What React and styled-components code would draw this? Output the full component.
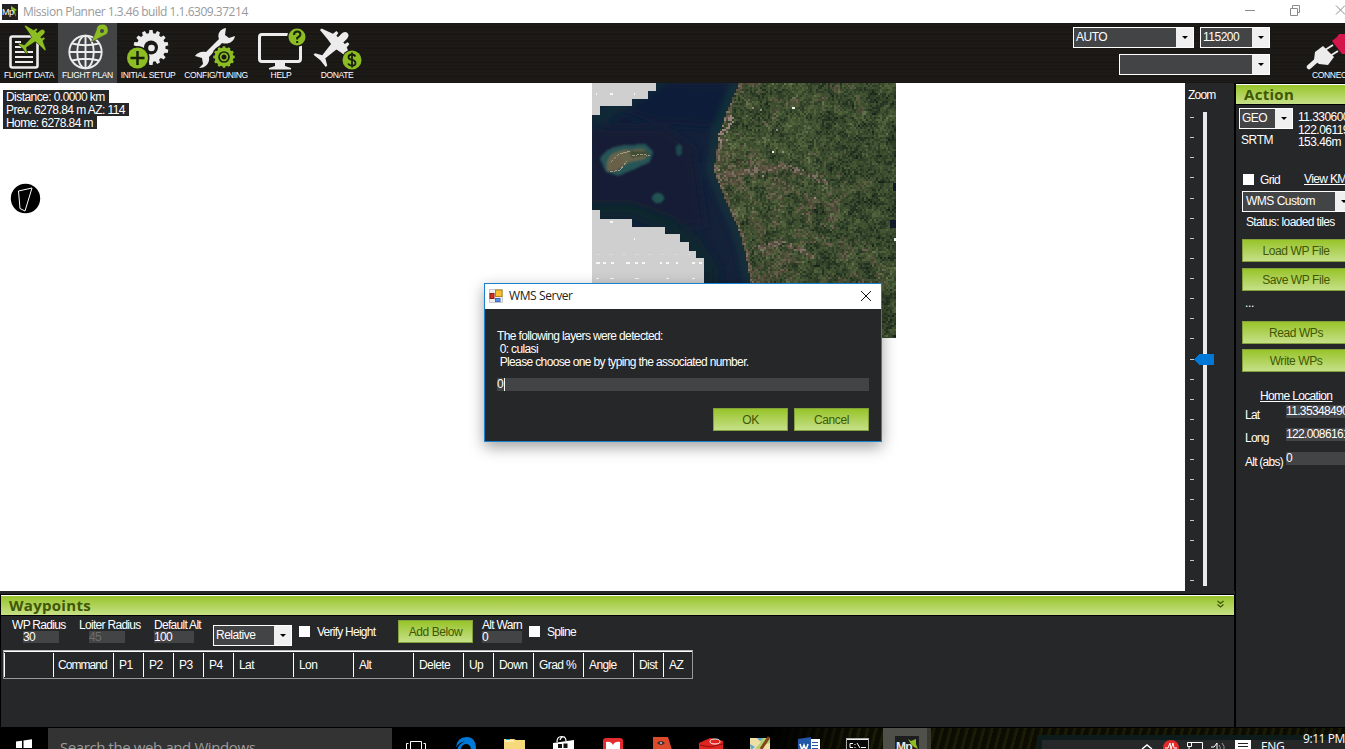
import React from "react";
import styled, { createGlobalStyle, css } from "styled-components";

const GlobalStyle = createGlobalStyle`
  * { box-sizing: border-box; }
  body { margin: 0; overflow: hidden; background: #000; }
`;

const ink = "#262729";
const sans = `"Liberation Sans", Arial, sans-serif`;
const humanist = `"Open Sans", "Noto Sans", sans-serif`;
const green = "linear-gradient(#98c42a, #c6e088)";

const Window = styled.div`
  width: 1345px; height: 749px; overflow: hidden; position: relative;
  display: flex; flex-direction: column; background: ${ink};
  font: 12px/13px ${sans}; letter-spacing: -0.64px; color: #fff;
  white-space: nowrap;
`;

/* ---------- title bar ---------- */
const TitleBar = styled.header`
  flex: 0 0 23px; background: #fff; color: #999; display: flex; align-items: center;
  padding-left: 2px; gap: 5px; font: 12px/22px ${humanist}; letter-spacing: -0.48px;
`;
const TitleText = styled.span`flex: 1; padding-top: 1px;`;
const TitleButtons = styled.svg`flex: none; width: 105px; height: 23px;`;

/* ---------- toolbar ---------- */
const Toolbar = styled.nav`
  flex: 0 0 60px; display: flex;
  background: repeating-linear-gradient(#1b1916 0 2px, #1e1b18 2px 3px, #191714 3px 5px, #1c1a17 5px 7px);
`;
const Tool = styled.div`
  width: ${p => p.$w}px; height: 60px; display: flex; flex-direction: column; align-items: center;
  background: ${p => (p.$active ? "#434446" : "transparent")};
  svg { display: block; flex: none; height: 47px; }
`;
const ToolLabel = styled.span`font: 8.5px/10px ${sans}; letter-spacing: -0.35px;`;
const Ports = styled.div`
  margin-left: auto; width: 197px; padding-top: 4px;
  display: grid; grid-template-columns: auto auto; justify-content: end; align-content: start; gap: 6px;
`;
const ConnectTool = styled(Tool)`margin-left: 33px; width: 42px; overflow: hidden; align-items: flex-start;`;
const ConnectLabel = styled(ToolLabel)`padding-left: 9px;`;

/* ---------- controls ---------- */
const SelectBox = styled.div`
  width: ${p => p.$w}px; height: 21px; border: 1px solid #fff; background: #434446;
  display: flex; flex: none; letter-spacing: -0.5px;
  ${p => p.$wide && css`grid-column: 1 / -1; justify-self: end;`}
  span { flex: 1; padding-left: ${p => p.$pad || 2}px; line-height: 19px; }
  i { width: 17px; background: #f0f0f0; display: grid; place-items: center; }
  i::after { content: ""; border: solid transparent; border-width: 3px 3px 0; border-top-color: #000; }
`;
const Select = ({ w, wide, pad, children }) => (
  <SelectBox $w={w} $wide={wide} $pad={pad}><span>{children}</span><i /></SelectBox>
);
const Button = styled.button`
  width: ${p => p.$w}px; height: 23px; padding: 0; margin: 0; flex: none; border: 1px solid #84a23c;
  background: ${green}; color: #405704; font: 12px/20px ${sans}; letter-spacing: -0.42px;
`;
const Check = styled.i`width: 11px; height: 11px; background: #fff; flex: none;`;
const Input = styled.div`
  width: ${p => p.$w}px; height: 13px; background: #434446; flex: none;
  color: ${p => (p.$dim ? "#6d6d6d" : "#fff")}; line-height: 13px; overflow: hidden;
`;
const SectionHeader = styled.h2`
  margin: 0; height: 21px; flex: none; border-top: 1px solid #fff; border-bottom: 1px solid #000;
  background: ${green}; color: #405704; padding: 0 10px 0 8px;
  font: bold 15px/18px ${humanist}; letter-spacing: 0.3px;
  display: flex; justify-content: space-between;
  svg { margin-top: 4px; }
`;

/* ---------- workspace ---------- */
const Workspace = styled.main`flex: 0 0 645px; display: flex;`;
const Left = styled.section`
  width: 1236px; display: flex; flex-direction: column; border-right: 1px solid #000;
`;
const MapRow = styled.div`display: flex; height: 508px;`;
const MapView = styled.div`
  width: 1185px; background: #fff; display: flex; align-items: flex-start;
`;
const MapInfo = styled.div`
  width: 592px; padding: 7px 0 0 3px; display: flex; flex-direction: column; align-items: flex-start;
  span { background: ${ink}; padding: 0 4px 0 3px; height: 13px; line-height: 14px; letter-spacing: -0.56px; }
`;
const Compass = styled.svg`margin: 54px 0 0 7px; width: 31px; height: 31px;`;
const Satellite = styled.svg`width: 304px; height: 255px; display: block;`;

const ZoomColumn = styled.aside`
  width: 50px; background: ${ink}; padding-top: 6px; border-right: 1px solid #000;
  display: flex; flex-direction: column;
  span { padding-left: 3px; letter-spacing: -0.8px; }
  svg { width: 48px; height: 488px; display: block; }
`;

const Waypoints = styled.section`margin-top: 3px; height: 134px; border: 1px solid #000;`;
const WaypointControls = styled.div`
  height: 34px; padding-left: 11px; display: grid; align-items: start;
  grid-template-columns: 67px 75px 59px 86px 99px 84px 46px auto;
`;
const Field = styled.div`
  padding-top: 3px; display: flex; flex-direction: column; line-height: 12px; letter-spacing: -0.7px;
  ${Input} { margin-left: ${p => p.$indent || 0}px; height: 12px; line-height: 13px; }
`;
const Option = styled.label`
  display: flex; gap: 7px; padding: 9px 0 0 ${p => p.$x || 0}px; letter-spacing: -0.75px;
  line-height: 14px;
  ${Check} { margin-top: 1px; }
`;
const Drop = styled.div`padding-top: ${p => p.$y}px;`;
const Grid = styled.div`
  margin-left: 2px; width: 690px; height: 29px; border: 1px solid #999; border-top-color: #bbb; display: flex;
  box-shadow: inset 0 1px #fff; padding: 2px 0 1px;
`;
const GridHead = styled.div`
  width: ${p => p.$w}px; padding-left: ${p => p.$pad || 5}px; border-left: 1px solid #fff;
  line-height: 24px; letter-spacing: ${p => (p.$pad ? "-0.95px" : "-0.6px")};
`;

/* ---------- right panel ---------- */
const Actions = styled.section`
  width: 109px; overflow: hidden; display: flex; flex-direction: column; align-items: flex-start;
  border: solid #000; border-width: 1px 0 1px 0;
  ${SectionHeader} { width: 140px; }
`;
const Position = styled.div`
  display: grid; grid-template-columns: 56px auto; grid-template-rows: 26px auto; padding: 3px 0 0 3px;
  height: 66px; align-items: start;
  p { margin: 0; line-height: 12.5px; grid-row: span 2; padding: 3px 0 0 3px; letter-spacing: -0.55px; }
  small { font-size: 12px; padding-left: 2px; letter-spacing: -0.4px; }
`;
const GridLine = styled.div`display: flex; height: 20px; padding-left: 7px; width: 140px;
  ${Check} { margin: 3px 6px 0 0; } span { width: 44px; padding-top: 3px; } u { padding-top: 2px; }`;
const Status = styled.div`padding: 4px 0 0 10px; height: 27px;`;
const Stack = styled.div`padding-left: 6px; display: flex; flex-direction: column; gap: ${p => p.$gap}px;`;
const Dots = styled.div`height: 30px; padding: 6px 0 0 9px; letter-spacing: -0.3px;`;
const Home = styled.div`
  padding: 18px 0 0 9px; display: grid; grid-template-columns: 41px 80px;
  grid-template-rows: 15px; grid-auto-rows: 23.3px;
  label { padding-top: 4px; letter-spacing: -0.75px; }
`;
const HomeTitle = styled.u`grid-column: 1 / -1; padding-left: 15px;`;

/* ---------- dialog ---------- */
const Dialog = styled.div`
  position: absolute; left: 484px; top: 283px; width: 398px; height: 159px;
  border: 1px solid #1a80d0; background: ${ink}; box-shadow: 0 5px 14px rgba(0,0,0,.38);
  display: flex; flex-direction: column;
`;
const DialogTitle = styled.div`
  height: 25px; background: #fff; color: #222; display: flex; align-items: center; padding: 0 10px 1px 4px; gap: 6px;
  font: 12px/24px ${humanist}; letter-spacing: -0.38px;
  span { flex: 1; } svg { flex: none; }
`;
const DialogBody = styled.div`padding: 21px 12px 0; display: flex; flex-direction: column;
  p { margin: 0; white-space: pre; }
  ${Input} { margin-top: 9px; }
`;
const Caret = styled.i`border-left: 1px solid #fff; margin-left: 1px;`;
const DialogButtons = styled.div`display: flex; justify-content: flex-end; gap: 6px; margin-top: 17px;`;

/* ---------- taskbar ---------- */
const Taskbar = styled.footer`
  flex: 0 0 21px; display: flex; overflow: hidden;
  background: linear-gradient(90deg, #000 770px, transparent 860px),
    repeating-linear-gradient(105deg, #0c0c02 0 4px, #1b1c07 6px 8px);
`;
const Start = styled.svg`width: 48px; height: 21px; background: #000; flex: none;`;
const Search = styled.div`
  width: 344px; height: 21px; background: #333; color: #9c9c9c; padding-left: 12px; overflow: hidden; flex: none;
  font: 15px/38px ${humanist}; letter-spacing: -0.4px;
`;
const Apps = styled.svg`width: 645px; height: 21px; flex: none;`;
const Tray = styled.div`
  width: 308px; height: 21px; border: solid #0d1b1b; border-width: 5px 0 0 5px; margin-top: 7px; background: #262729;
  display: flex; font: 12px/14px ${humanist}; flex: none;
  svg { width: 219px; height: 10px; flex: none; }
`;
const Language = styled.span`width: 43px; letter-spacing: -0.4px;`;
const Clock = styled.span`margin-top: -8px; padding-left: 1px; letter-spacing: -0.4px;`;

/* ---------- drawings ---------- */
const LIME = "#8cbd22";
const PALE = "#ececec";

const LogoMark = () => (
  <svg width="16" height="16" viewBox="0 0 16 16">
    <rect width="16" height="16" fill="#222" />
    <path d="M9 2l6 4-2 1 1 6-2-4-3-4z" fill={LIME} />
    <text x="0" y="11" fontSize="9" fill="#fff" fontFamily="Liberation Sans">Mp</text>
  </svg>
);

/* twin-engine airplane seen from above, nose pointing up */
const PLANE =
  "M0-17C2.500-17 3.500-15 3.500-12V-8H5.500L6-11H8.500L9-7L20-3V-1L9 0L3.500 1L2 14L8 17.500V19.500L0 18.500" +
  "L-8 19.500V17.500L-2 14L-3.500 1L-9 0L-20-1V-3L-9-7L-8.500-11H-6L-5.500-8H-3.500V-12C-3.500-15-2.500-17 0-17Z";

function gear(cx, cy, outer, inner, teeth) {
  const pts = [];
  for (let i = 0; i < teeth; i++) {
    [[-0.32, inner], [-0.2, outer], [0.2, outer], [0.32, inner]].forEach(([o, r]) => {
      const a = ((i + o) / teeth) * Math.PI * 2;
      pts.push(`${(cx + r * Math.sin(a)).toFixed(2)},${(cy - r * Math.cos(a)).toFixed(2)}`);
    });
  }
  return pts.join(" ");
}

const FlightDataIcon = () => (
  <svg width="58" viewBox="0 23 58 47">
    <rect x="10.500" y="36.500" width="27" height="31" rx="2" fill="none" stroke={PALE} strokeWidth="2.600" />
    <path d="M15 42h6M15 47h10M15 52h18M15 57h18M15 62h18" stroke={PALE} strokeWidth="2" />
    <path d={PLANE} fill={LIME} stroke="#1b1916" strokeWidth=".7" transform="translate(34 39) rotate(50) scale(.8)" />
  </svg>
);
const FlightPlanIcon = () => (
  <svg width="59" viewBox="58 23 59 47">
    <g fill="none" stroke={PALE} strokeWidth="1.900">
      <circle cx="85.500" cy="52" r="16.200" />
      <ellipse cx="85.500" cy="52" rx="8.300" ry="16.200" />
      <path d="M85.500 36v32M69.500 52h32M72 43.500q13.500 3.500 27 0M72 60.500q13.500-3.500 27 0" />
    </g>
    <path d="M91.500 42L96.500 29.500A5.800 5.800 0 1 1 104 35.500Z" fill={LIME} stroke="#434446" strokeWidth=".6" />
    <circle cx="102" cy="31" r="2" fill="#434446" />
  </svg>
);
const InitialSetupIcon = () => (
  <svg width="62" viewBox="117 23 62 47">
    <polygon points={gear(151, 47.500, 17.500, 14.500, 14)} fill={PALE} />
    <circle cx="151" cy="47.500" r="7" fill="#1b1916" />
    <circle cx="151.500" cy="48" r="3.300" fill={PALE} />
    <circle cx="137.500" cy="58" r="12" fill="#1b1916" />
    <circle cx="137.500" cy="58" r="10.500" fill={LIME} />
    <path d="M137.500 51v14M130.500 58h14" stroke="#16200a" strokeWidth="2.500" />
  </svg>
);
const ConfigIcon = () => (
  <svg width="74" viewBox="179 23 74 47">
    <path d="M226 28c-6 1-9 6-7 11L206 52c-5-1-9 1-11 4l7 2 1 6-4 4c7 0 11-5 10-11L222 43c6 2 12-1 13-7l-6 2-4-3z" fill={PALE} />
    <circle cx="224" cy="57" r="12" fill="#1b1916" />
    <polygon points={gear(224, 57, 10.800, 9.300, 12)} fill={LIME} />
    <circle cx="224" cy="57" r="5" fill="none" stroke="#1d260d" strokeWidth="1.700" />
    <circle cx="224" cy="57" r="2.500" fill="#1b1916" />
  </svg>
);
const HelpIcon = () => (
  <svg width="56" viewBox="253 23 56 47">
    <rect x="259.500" y="34.500" width="41" height="27" rx="2.500" fill="none" stroke={PALE} strokeWidth="3" />
    <path d="M275 62h10v4l6 2v1.500h-22V68l6-2z" fill={PALE} />
    <circle cx="297" cy="37" r="10" fill="#1b1916" />
    <circle cx="297" cy="37" r="8.500" fill={LIME} />
    <path d="M294 35q0-3.500 3.200-3.500t3.200 2.700q0 2-3.200 3.600v1.700M297.200 41v2" fill="none" stroke="#1b210f" strokeWidth="2" />
  </svg>
);
const DonateIcon = () => (
  <svg width="56" viewBox="309 23 56 47">
    <path d={PLANE} fill={PALE} transform="translate(334.500 46) rotate(45) scale(1.080)" />
    <circle cx="352" cy="60" r="10.500" fill="#1b1916" />
    <circle cx="352" cy="60" r="9.500" fill={LIME} />
    <path d="M355.500 56.500q-1-2-3.500-2-3.500 0-3.500 2.700 0 2 3.500 2.700t3.500 3q0 2.800-3.500 2.800-2.800 0-3.800-2.200M352 52.500v15" fill="none" stroke="#1b210f" strokeWidth="1.800" />
  </svg>
);
const ConnectIcon = () => (
  <svg width="42" viewBox="1303 23 42 47">
    <path d="M1309 67l9-8" stroke={PALE} strokeWidth="4.500" strokeLinecap="round" />
    <path d="M1315 52l8-6 11 11-6 8-9-1-5-4z" fill={PALE} />
    <path d="M1325 50l8-5M1330 56l8-5" stroke={PALE} strokeWidth="2" />
    <path d="M1332 41l5-4 2-3h8v20h-5z" fill="#d5164b" />
  </svg>
);

/* terrain raster: 2px cells grouped by colour into one path each */
const COAST = [[0, 146], [25, 135], [50, 126], [87, 121], [117, 133], [144, 145], [170, 153], [200, 158], [256, 168]];
const coastAt = y => {
  for (let i = 1; i < COAST.length; i++) {
    const [y0, x0] = COAST[i - 1];
    const [y1, x1] = COAST[i];
    if (y <= y1) return x0 + ((x1 - x0) * (y - y0)) / (y1 - y0);
  }
  return 168;
};
const hash = (x, y) => {
  let n = Math.imul(x | 0, 374761393) + Math.imul(y | 0, 668265263);
  n = Math.imul(n ^ (n >>> 13), 1274126177);
  return ((n ^ (n >>> 16)) >>> 0) / 4294967296;
};
const smooth = (x, y) => {
  const xi = Math.floor(x), yi = Math.floor(y), fx = x - xi, fy = y - yi;
  const top = hash(xi, yi) * (1 - fx) + hash(xi + 1, yi) * fx;
  const bottom = hash(xi, yi + 1) * (1 - fx) + hash(xi + 1, yi + 1) * fx;
  return top * (1 - fy) + bottom * fy;
};
const GREENS = ["#18231a", "#243221", "#303f28", "#3a4b2e", "#445534", "#50613c", "#62724c"];
const BROWNS = ["#43442f", "#4e4b38", "#5b5240", "#6a5d4e", "#7d7064"];
const RIVERS = [
  [[124, 92], [155, 88], [190, 82], [215, 90], [235, 100]],
  [[165, 165], [185, 158], [205, 164], [222, 174]],
];
const riverDistance = (x, y) => {
  let best = 99;
  RIVERS.forEach(line => {
    for (let i = 1; i < line.length; i++) {
      const [ax, ay] = line[i - 1], [bx, by] = line[i];
      if (x >= ax && x <= bx) best = Math.min(best, Math.abs(y - (ay + ((by - ay) * (x - ax)) / (bx - ax))));
    }
  });
  return best;
};
const terrain = (() => {
  const out = {};
  for (let y = 0; y < 255; y += 2) {
    const edge = coastAt(y);
    for (let x = Math.ceil(edge / 2) * 2; x < 304; x += 2) {
      const n = hash(x, y);
      const m = hash(y + 7, x + 3);
      const large = smooth(x / 24 + 9, y / 20 + 4);
      const mid = smooth(x / 7, y / 7);
      const inland = (x - edge) / 150;
      const river = riverDistance(x, y) < 3;
      const shore = x - edge < 4;
      const brown = large * 0.45 + mid * 0.4 + (river ? 0.28 : 0) + (shore ? 0.25 : 0) - inland * 0.2;
      let c;
      if (brown + n * 0.35 > 0.68) c = BROWNS[Math.min(4, Math.floor(m * 4 + (river || shore ? 1 : 0)))];
      else c = GREENS[Math.max(0, Math.min(6, Math.floor(m * 3.6 + mid * 3.4 + 0.7 - inland * 0.9)))];
      if (n > 0.998 && x < 230) c = "#938a7b";
      if (x - edge < 10 && y > 30 && y < 60 && n > 0.6) c = "#96827b";
      out[c] = (out[c] || "") + `M${x} ${y}h2v2h-2z`;
    }
  }
  return out;
})();
const coastLine = COAST.map(([y, x]) => `${x},${y}`).join(" ");

const SatelliteTiles = () => (
  <Satellite viewBox="0 0 304 255" shapeRendering="crispEdges">
    <defs>
      <linearGradient id="sea" x1="0" x2="1">
        <stop offset="0" stopColor="#111f38" /><stop offset=".65" stopColor="#15223a" /><stop offset="1" stopColor="#132d3b" />
      </linearGradient>
      <filter id="soft"><feGaussianBlur stdDeviation="4" /></filter>
      <filter id="softer"><feGaussianBlur stdDeviation="1.2" /></filter>
    </defs>
    <rect width="304" height="255" fill="url(#sea)" />
    <g filter="url(#soft)">
      <path d="M62 0h76l-12 44-60-4-32-10z" fill="#081c37" />
      <path d="M-4 44h75l30 20 12 80-55-4-62-16z" fill="#171f36" />
      <path d="M0 39L70-4" stroke="#0b2b35" strokeWidth="12" />
      <path d="M-4 127h42l38 14 26 20 16 26v30" fill="none" stroke="#07272f" strokeWidth="15" />
      <polyline points={coastLine} transform="translate(-1)" fill="none" stroke="#19373b" strokeWidth="7" />
    </g>
    <g filter="url(#softer)">
      <path d="M8 76Q14 63 35 62l18-1 8 8-3 10-15 7-17 7-12-4z" fill="#265556" />
      <path d="M15 79q4-11 18-12l18-1 6 5-4 5-16 3-13 8-9 1z" fill="#66654c" />
      <path d="M17 86l4-10 9-3 2 8-8 7z" fill="#6b5e4a" />
      <path d="M38 68l16 0 4 4-19 3z" fill="#3c4d35" />
      <ellipse cx="87" cy="67" rx="3.500" ry="6" fill="#1b4650" />
      <ellipse cx="66" cy="115" rx="6" ry="5" fill="#225253" />
    </g>
    <path d="M19 79l8-8 12-3M40 73l10-2 8 2M18 89l10-2 7-9" fill="none" stroke="#a39a82" strokeDasharray="3 1" />
    {Object.entries(terrain).map(([fill, d]) => <path key={fill} d={d} fill={fill} />)}
    <path d="M304 100h-3v8h3zM298 137h6v8h-6z" fill="#101a28" />
    <path d="M200 24h3v2h-3zM180 68h2v2h-2zM302 155h2v3h-2z" fill="#eee" />
    <path d="M0 0h64v8h-8v8h-16v7H8v9H0z" fill="#cfcfcf" />
    <path d="M0 127h8v9h32v8h33v7h15v8h9v9h7v7h8v80H0z" fill="#cfcfcf" />
    <path d="M4 10h1v2H4zM18 10h3v2h-3zM42 10h1v2h-1zM18 138h3v2h-3zM42 155h1v2h-1zM4 179h4v2H4zM11 179h3v2h-3zM19 179h3v2h-3zM34 179h4v2h-4zM43 179h3v2h-3zM50 179h3v2h-3zM68 179h2v2h-2zM74 179h3v2h-3zM84 179h2v2h-2zM100 179h3v2h-3zM107 179h3v2h-3zM4 195h3v1H4zM18 195h4v1h-4zM43 195h4v1h-4zM74 195h3v1h-3zM100 195h3v1h-3z" fill="#f7f7f7" />
    <path d="M4 171.500h98" stroke="#d9d9d9" strokeDasharray="4 9" />
  </Satellite>
);

const TICKS = Array.from({ length: 24 }, (_, i) => 15 + i * 20.13);
const ZoomSlider = () => (
  <svg viewBox="0 0 48 488" shapeRendering="crispEdges">
    {TICKS.map(y => <rect key={y} x="5" y={Math.round(y)} width="4" height="1" fill="#c8c8c8" />)}
    <rect x="18" y="10" width="4" height="474" fill="#e7eaea" />
    <path d="M9 257.500l6-5.500h14v11H15z" fill="#0078d7" />
  </svg>
);

const AppIcons = () => (
  <Apps viewBox="392 728 645 21">
    <path d="M410.500 750v-8.500h11v8.500M406.500 751v-7.500h2M425.500 751v-7.500h-2" fill="none" stroke="#fff" />
    <path d="M456 747.500q1-10.500 10.500-10.500Q476 737 476 749h-5q-1-5-5-5-3.500 0-5.500 5h-3q1-5 7-7.500-5 .5-8.500 6z" fill="#0078d7" />
    <path d="M504 739h10l2 1h9v10h-21z" fill="#f6d97b" /><path d="M505 740h8l2 2h-10z" fill="#fff0b0" /><path d="M506 739h4v1h-4z" fill="#24a2d8" />
    <path d="M553 743l21-3v10h-21z" fill="#fff" /><path d="M557 742q0-5.500 4.500-5.500t4.500 4.500M560 740q1-4 5-3" fill="none" stroke="#fff" strokeWidth="1.200" />
    <path d="M558 744h4v4h-4zM563.500 743.500h4v4.500h-4z" fill="#111" />
    <rect x="603" y="738" width="20" height="14" rx="3" fill="#e32b30" /><path d="M606 742q5-1 7 3 2-4 7-3v8h-14z" fill="#fff" />
    <path d="M653 737h15l4 13h-19z" fill="#dd4b2c" /><path d="M657 743q4-4 8 0-4 4-8 0z" fill="#3b302e" /><circle cx="661" cy="743" r="1" fill="#c9c9c9" />
    <path d="M699 743l11-5 13 3v9h-24z" fill="#e1231f" /><ellipse cx="715" cy="741.500" rx="5" ry="2.500" fill="none" stroke="#fff" /><path d="M700 745l10 2 13-3" stroke="#8e100e" fill="none" />
    <path d="M750 738h20v12h-20z" fill="#b6cf76" /><path d="M750 738h7l4 4-7 8h-4zM764 745l6-2v7h-8z" fill="#eee0a4" /><path d="M757 738h6l-3 3zM750 744l5 3-4 3z" fill="#58a7d4" /><path d="M769 737l-8 12" stroke="#854217" strokeWidth="3" />
    <path d="M798 739l13-2v13h-13z" fill="#2357a8" /><path d="M811 739h9v11h-9z" fill="#fff" /><path d="M812 742.500h6M812 745.500h6M812 748.500h6" stroke="#2357a8" />
    <path d="M800 744l2 6 2-5 2 5 2-6" stroke="#fff" fill="none" strokeWidth="1.500" />
    <rect x="846.500" y="738.500" width="22" height="13" fill="#080808" stroke="#aaa" /><path d="M847 739.500h21" stroke="#eee" /><path d="M853 743.500h-3v4h3M855 744v1M855 747v1M857 743l3 5M861 747.500h5" fill="none" stroke="#fff" />
    <rect x="883" y="728" width="44" height="21" fill="#50504a" /><rect x="927" y="728" width="4" height="21" fill="#38382f" />
    <rect x="895" y="736" width="24" height="14" fill="#1d1e1f" />
    <path d="M908 739l3 2 5-2v5l2 5-4-2-3-3z" fill={LIME} />
    <text x="896" y="751" fontSize="12" fontWeight="bold" fill="#e8e8e8" fontFamily="Liberation Sans">Mp</text>
  </Apps>
);
const TrayIcons = () => (
  <svg viewBox="1042 740 219 10">
    <path d="M1142 749l5-4 5 4" fill="none" stroke="#fff" strokeWidth="1.500" />
    <circle cx="1171" cy="748" r="8" fill="#e52a2c" /><path d="M1165 748h3l2-5 1 6 2-6 1 5h3" stroke="#fff" fill="none" />
    <path d="M1191 742.500h11.500v8M1187.500 742.500h4v4h-4zM1189 747v3h3" fill="none" stroke="#fff" />
    <path d="M1211 747h3l3-4v8" fill="none" stroke="#fff" /><path d="M1219 745q2 2 1 5M1222 743q3 3 2 7" fill="none" stroke="#999" />
    <rect x="1235" y="740" width="16" height="11" fill="#fff" /><path d="M1238 743.500h10M1238 746.500h10" stroke="#222" />
  </svg>
);

const TOOLS = [
  ["FLIGHT DATA", 58, FlightDataIcon], ["FLIGHT PLAN", 59, FlightPlanIcon], ["INITIAL SETUP", 62, InitialSetupIcon],
  ["CONFIG/TUNING", 74, ConfigIcon], ["HELP", 56, HelpIcon], ["DONATE", 56, DonateIcon],
];
const COLUMNS = [
  ["", 49], ["Command", 60, 4], ["P1", 30], ["P2", 30], ["P3", 30], ["P4", 30], ["Lat", 60], ["Lon", 60], ["Alt", 60],
  ["Delete", 50], ["Up", 30], ["Down", 40], ["Grad %", 50], ["Angle", 50], ["Dist", 30], ["AZ", 28],
];

export default function App() {
  return (
    <Window>
      <GlobalStyle />
      <TitleBar>
        <LogoMark />
        <TitleText>Mission Planner 1.3.46 build 1.1.6309.37214</TitleText>
        <TitleButtons viewBox="1240 0 105 23" fill="none" stroke="#8c8c8c">
          <path d="M1245 10.500h10M1290.500 8.500h7v7h-7zM1292.500 8v-2.500h7v7h-2M1336 5.500l9 9M1345 5.500l-9 9" />
        </TitleButtons>
      </TitleBar>

      <Toolbar>
        {TOOLS.map(([label, w, Icon]) => (
          <Tool key={label} $w={w} $active={label === "FLIGHT PLAN"}><Icon /><ToolLabel>{label}</ToolLabel></Tool>
        ))}
        <Ports>
          <Select w={121}>AUTO</Select>
          <Select w={70}>115200</Select>
          <Select w={151} wide />
        </Ports>
        <ConnectTool $w={42}><ConnectIcon /><ConnectLabel>CONNECT</ConnectLabel></ConnectTool>
      </Toolbar>

      <Workspace>
        <Left>
          <MapRow>
            <MapView>
              <MapInfo>
                <span>Distance: 0.0000 km</span>
                <span>Prev: 6278.84 m AZ: 114</span>
                <span>Home: 6278.84 m</span>
                <Compass viewBox="0 0 31 31">
                  <circle cx="15.500" cy="15.500" r="14.700" fill="#000" />
                  <path d="M8.500 8l13.500-3-7 23-5-2.500z" fill="none" stroke="#fff" />
                </Compass>
              </MapInfo>
              <SatelliteTiles />
            </MapView>
            <ZoomColumn><span>Zoom</span><ZoomSlider /></ZoomColumn>
          </MapRow>

          <Waypoints>
            <SectionHeader>
              Waypoints
              <svg width="7" height="8" viewBox="0 0 7 8">
                <path d="M.5 1l3 2.500 3-2.500M.5 4.500l3 2.500 3-2.500" fill="none" stroke="#405704" strokeWidth="1.300" />
              </svg>
            </SectionHeader>
            <WaypointControls>
              <Field $indent={11}>WP Radius<Input $w={36}>30</Input></Field>
              <Field $indent={10}>Loiter Radius<Input $w={36} $dim>45</Input></Field>
              <Field>Default Alt<Input $w={40}>100</Input></Field>
              <Drop $y={9}><Select w={79}>Relative</Select></Drop>
              <Option><Check />Verify Height</Option>
              <Drop $y={4}><Button $w={75}>Add Below</Button></Drop>
              <Field>Alt Warn<Input $w={40}>0</Input></Field>
              <Option $x={1}><Check />Spline</Option>
            </WaypointControls>
            <Grid>{COLUMNS.map(([name, w, pad]) => <GridHead key={name} $w={w} $pad={pad}>{name}</GridHead>)}</Grid>
          </Waypoints>
        </Left>

        <Actions>
          <SectionHeader>Action</SectionHeader>
          <Position>
            <Select w={54}>GEO</Select>
            <p>11.3306009<br />122.0611925<br />153.46m</p>
            <small>SRTM</small>
          </Position>
          <GridLine><Check /><span>Grid</span><u>View KML</u></GridLine>
          <Stack $gap={0}><Select w={111} pad={3}>WMS Custom</Select></Stack>
          <Status>Status: loaded tiles</Status>
          <Stack $gap={6}>
            <Button $w={108}>Load WP File</Button>
            <Button $w={108}>Save WP File</Button>
          </Stack>
          <Dots>...</Dots>
          <Stack $gap={5}>
            <Button $w={108}>Read WPs</Button>
            <Button $w={108}>Write WPs</Button>
          </Stack>
          <Home>
            <HomeTitle>Home Location</HomeTitle>
            <label>Lat</label><Input $w={80}>11.3534849077</Input>
            <label>Long</label><Input $w={80}>122.008616134</Input>
            <label>Alt (abs)</label><Input $w={80}>0</Input>
          </Home>
        </Actions>
      </Workspace>

      <Taskbar>
        <Start viewBox="0 728 48 21"><path d="M16 741.500l6-.8V748h-6zM23.500 740.500l8.500-1.200v8.700h-8.500zM16 749h6v4h-6zM23.500 749H32v4h-8.500z" fill="#fff" /></Start>
        <Search>Search the web and Windows</Search>
        <AppIcons />
        <Tray><TrayIcons /><Language>ENG</Language><Clock>9:11 PM</Clock></Tray>
      </Taskbar>

      <Dialog>
        <DialogTitle>
          <svg width="14" height="14" viewBox="0 0 14 14">
            <path d="M.5 .5h13v13H.5z" fill="#eee" stroke="#c8c8c8" />
            <rect x="6.500" y="1" width="6.500" height="6.500" fill="#f9c02e" stroke="#b58520" />
            <rect x="1" y="4.500" width="4" height="5" fill="#d22f20" stroke="#8e1a12" />
            <rect x="6.500" y="9.500" width="4.500" height="3" fill="#5b93ec" stroke="#376cc4" />
          </svg>
          <span>WMS Server</span>
          <svg width="10" height="10" viewBox="0 0 10 10"><path d="M0 0l10 10M10 0L0 10" stroke="#111" /></svg>
        </DialogTitle>
        <DialogBody>
          <p>The following layers were detected:</p>
          <p> 0: culasi</p>
          <p> Please choose one by typing the associated number.</p>
          <Input $w={372}>0<Caret /></Input>
          <DialogButtons><Button $w={75}>OK</Button><Button $w={75}>Cancel</Button></DialogButtons>
        </DialogBody>
      </Dialog>
    </Window>
  );
}
